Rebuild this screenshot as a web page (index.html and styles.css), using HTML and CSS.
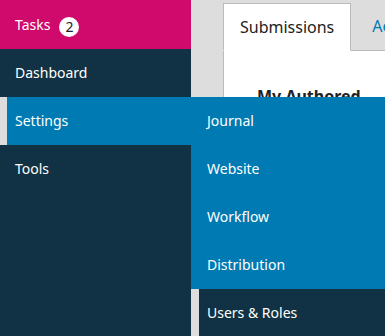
FILE: index.html
```html
<!DOCTYPE html>
<html lang="en">
<head>
	<meta charset="UTF-8">
	<title>Submissions</title>
	<link rel="stylesheet" href="styles.css">
</head>
<body>
	<div class="app">
		<div class="sidebar">
			<div class="tasks">Tasks <span class="badge">2</span></div>
			<ul class="nav">
				<li>Dashboard</li>
				<li class="current">Settings
					<ul class="submenu">
						<li>Journal</li>
						<li>Website</li>
						<li>Workflow</li>
						<li>Distribution</li>
						<li class="focus">Users &amp; Roles</li>
					</ul>
				</li>
				<li>Tools</li>
			</ul>
		</div>
		<div class="main">
			<ul class="tabs">
				<li class="act">Submissions</li>
				<li>Active</li>
			</ul>
			<div class="panel">
				<h2>My Authored</h2>
			</div>
		</div>
	</div>
</body>
</html>
```

FILE: styles.css
```css
/* 385 x 336 */
body{
	margin:0;
	background:#ddd;
	font-family:"Noto Sans", "Open Sans", sans-serif;
	font-size:14px;
	color:#fff;
	overflow:hidden;
}
ul{
	list-style:none;
	padding:0;
	margin:0;
}
.app{
	display:flex;
	height:336px;
}
.sidebar{
	width:191px;
	flex:none;
	background:#113244;
}
.tasks{
	height:49px;
	display:flex;
	align-items:center;
	padding-left:15px;
	background:#d00a6c;
}
.badge{
	width:20px;
	height:20px;
	margin:5px 0 0 9px;
	border-radius:50%;
	background:#fff;
	color:#222;
	font-size:14px;
	line-height:20px;
	text-align:center;
}
.nav > li{
	height:48px;
	line-height:48px;
	padding-left:15px;
}
.nav .current{
	position:relative;
	background:#007ab2;
	border-left:7px solid #ddd;
	padding-left:8px;
}
.submenu{
	position:absolute;
	top:0;
	left:184px;
	width:194px;
	background:#007ab2;
	z-index:2;
}
.submenu li{
	height:48px;
	line-height:48px;
	padding-left:16px;
}
.submenu .focus{
	background:#113244;
	border-left:8px solid #ddd;
	padding-left:8px;
}
.main{
	flex:1;
	display:flex;
	flex-direction:column;
	padding:3px 0 0 32px;
	min-width:0;
	overflow:hidden;
}
.tabs{
	display:flex;
	white-space:nowrap;
}
.tabs li{
	height:46px;
	line-height:46px;
	font-size:16px;
	color:#007ab2;
	padding:0 16px 0 21px;
}
.tabs .act{
	position:relative;
	height:46px;
	margin-bottom:-1px;
	background:#fff;
	color:#222;
	border:1px solid #bbb;
	border-bottom:1px solid #fff;
	padding:0 16px;
}
.panel{
	flex:1;
	background:#fff;
	border:1px solid #bbb;
	border-right:none;
	padding:35px 0 0 33px;
}
.panel h2{
	margin:0;
	font-size:16px;
	line-height:20px;
	font-weight:bold;
	color:#222;
}
```
